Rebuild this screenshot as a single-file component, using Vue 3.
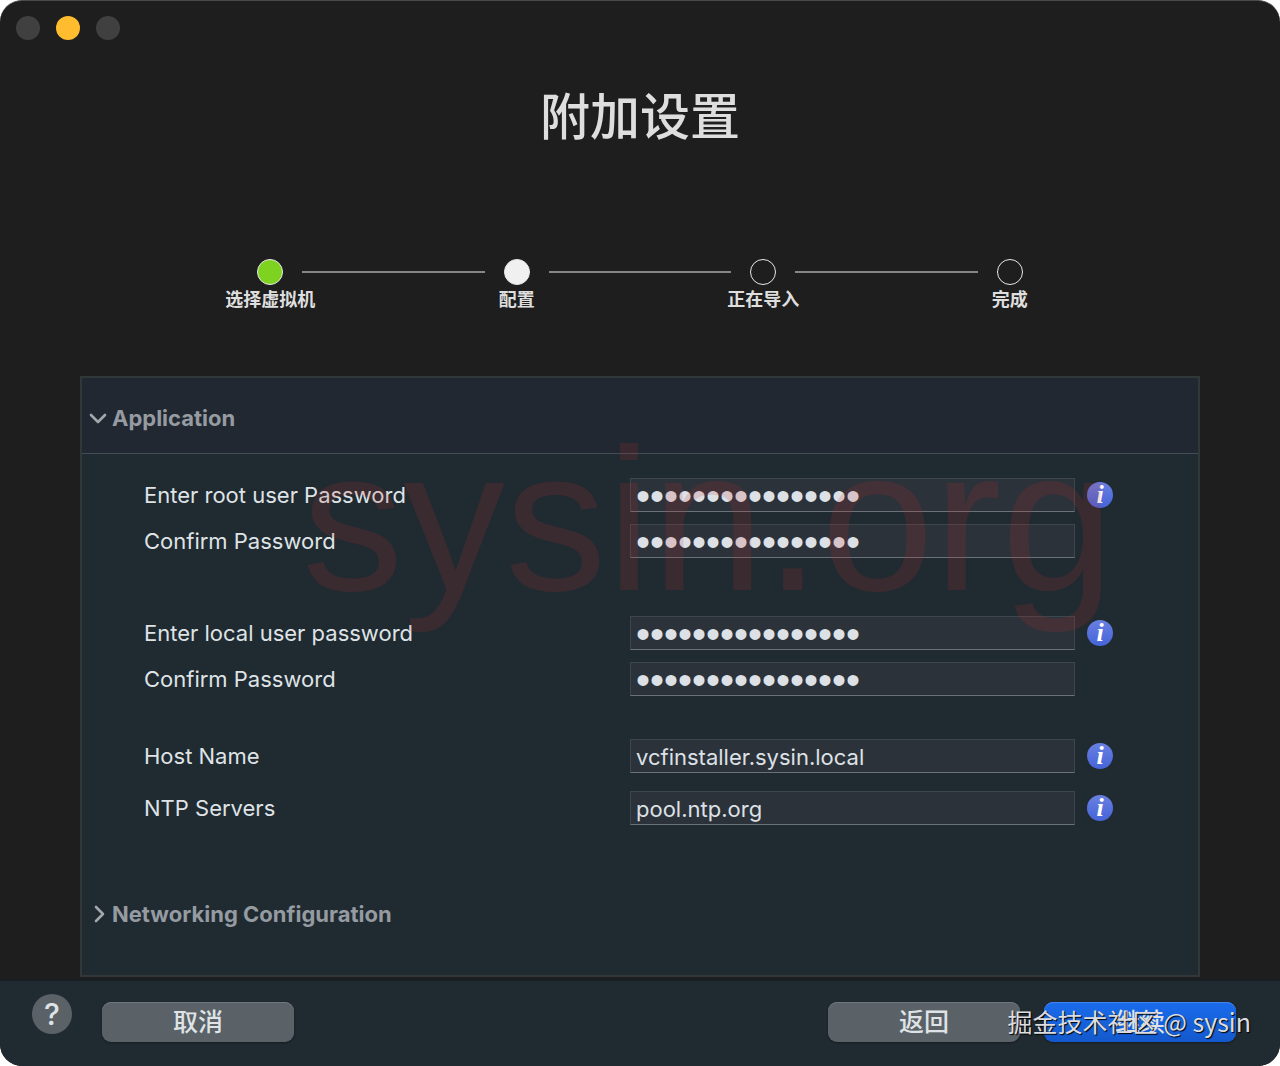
<script setup>
import { ref, reactive } from 'vue'

// --- 步驟 ---
const steps = ref([
  { name: '选择虚拟机', state: 'done' },
  { name: '配置', state: 'active' },
  { name: '正在导入', state: 'todo' },
  { name: '完成', state: 'todo' }
])

// --- 表單欄位 ---
const groups = reactive([
  [
    { id: 'root-pw', label: 'Enter root user Password', type: 'password', value: 'VMware1!VMware1!', info: true },
    { id: 'root-pw2', label: 'Confirm Password', type: 'password', value: 'VMware1!VMware1!', info: false }
  ],
  [
    { id: 'local-pw', label: 'Enter local user password', type: 'password', value: 'VMware1!VMware1!', info: true },
    { id: 'local-pw2', label: 'Confirm Password', type: 'password', value: 'VMware1!VMware1!', info: false }
  ],
  [
    { id: 'host', label: 'Host Name', type: 'text', value: 'vcfinstaller.sysin.local', info: true },
    { id: 'ntp', label: 'NTP Servers', type: 'text', value: 'pool.ntp.org', info: true }
  ]
])

const appOpen = ref(true)
const netOpen = ref(false)
</script>

<template>
  <div class="window">
    <div class="titlebar">
      <button class="light" aria-label="关闭"></button>
      <button class="light minimize" aria-label="最小化"></button>
      <button class="light" aria-label="缩放"></button>
    </div>

    <h1>附加设置</h1>

    <ol class="steps">
      <li v-for="step in steps" :key="step.name" :class="step.state">
        <div class="track"><span class="dot"></span></div>
        <span class="step-name">{{ step.name }}</span>
      </li>
    </ol>

    <main class="panel">
      <button class="section-head" :class="{ open: appOpen }" @click="appOpen = !appOpen">
        <svg class="chevron" :class="{ open: appOpen }" width="20" height="20" viewBox="0 0 20 20">
          <path d="M7 3 L14 10 L7 17" />
        </svg>
        Application
      </button>

      <form v-if="appOpen" class="fields" @submit.prevent>
        <div v-for="(group, gi) in groups" :key="gi" class="group">
          <div v-for="f in group" :key="f.id" class="row">
            <label :for="f.id">{{ f.label }}</label>
            <input :id="f.id" v-model="f.value" :type="f.type" autocomplete="off">
            <button v-if="f.info" type="button" class="info">i</button>
          </div>
        </div>
      </form>

      <button class="section-head" @click="netOpen = !netOpen">
        <svg class="chevron" :class="{ open: netOpen }" width="20" height="20" viewBox="0 0 20 20">
          <path d="M8 3 L15 10 L8 17" />
        </svg>
        Networking Configuration
      </button>
    </main>

    <footer>
      <button class="help">?</button>
      <button class="btn">取消</button>
      <button class="btn back">返回</button>
      <button class="btn primary">继续</button>
    </footer>

    <div class="watermark">sysin.org</div>
    <div class="credit">掘金技术社区 @ sysin</div>
  </div>
</template>

<style>
body {
  background: #fff;
}
</style>

<style scoped>
.window {
  position: relative;
  display: flex;
  flex-direction: column;
  box-sizing: border-box;
  min-height: 100vh;
  overflow: hidden;
  border-top: 1px solid #4a4a4a;
  border-radius: 22px;
  background: #1e1e1e;
  color: #dfe3e6;
  font-family: Inter, "Noto Sans CJK SC", sans-serif;
}

button {
  padding: 0;
  border: none;
  color: inherit;
  font-family: inherit;
}

.titlebar {
  display: flex;
  gap: 16px;
  padding: 15px 16px;
}

.light {
  width: 24px;
  height: 24px;
  border-radius: 50%;
  background: #404040;
}

.light.minimize {
  background: #febc2e;
}

h1 {
  margin: 26px 0 0;
  text-align: center;
  font-size: 50px;
  font-weight: 500;
  line-height: 72px;
  color: #dedede;
}

.steps {
  display: grid;
  grid-template-columns: repeat(4, 1fr);
  margin: 106px 147px 0;
  padding: 0;
  list-style: none;
}

.steps li {
  display: flex;
  flex-direction: column;
  align-items: center;
}

.track {
  display: flex;
  align-items: center;
  align-self: stretch;
}

.track::before,
.track::after {
  content: "";
  flex: 1;
  height: 2px;
  background: #868686;
}

.steps li:first-child .track::before,
.steps li:last-child .track::after {
  visibility: hidden;
}

.dot {
  box-sizing: border-box;
  width: 26px;
  height: 26px;
  margin: 0 19px;
  border: 1px solid #e8e8e8;
  border-radius: 50%;
}

.done .dot {
  background: #7ed321;
}

.active .dot {
  background: #f0f0f0;
}

.step-name {
  font-size: 18px;
  font-weight: 700;
  line-height: 30px;
  color: #dedede;
}

.panel {
  flex: 1;
  margin: 61px 80px 2px;
  border: 2px solid #32373a;
  background: #202a31;
}

.section-head {
  display: flex;
  align-items: center;
  gap: 4px;
  width: 100%;
  height: 76px;
  padding: 0 6px;
  background: transparent;
  color: #959ba1;
  font-size: 22px;
  font-weight: 700;
}

.section-head.open {
  padding-top: 4px;
  border-bottom: 1px solid #454d54;
  background: #212831;
}

.chevron {
  fill: none;
  stroke: #a3a8ad;
  stroke-width: 2.6;
  stroke-linecap: round;
  stroke-linejoin: round;
}

.chevron.open {
  transform: rotate(90deg);
}

.fields {
  padding: 24px 85px 51px 62px;
}

.group {
  display: grid;
  gap: 12px;
  margin-bottom: 58px;
}

.group:nth-child(2) {
  margin-bottom: 43px;
}

.group:last-child {
  gap: 18px;
  margin-bottom: 0;
}

.row {
  display: grid;
  grid-template-columns: 486fr 445fr 38px;
  align-items: center;
}

label {
  font-size: 22px;
  line-height: 34px;
}

input {
  box-sizing: border-box;
  width: 100%;
  height: 34px;
  padding: 2px 5px 0;
  border: 1px solid #3d464d;
  border-bottom-color: #6a7177;
  border-radius: 0;
  outline: none;
  background: #2c323a;
  color: #dde1e6;
  font-family: Inter, "Noto Sans CJK SC", sans-serif;
  font-size: 22px;
}

input[type="password"] {
  font-family: "Liberation Sans", sans-serif;
  font-size: 40px;
}

.info {
  width: 26px;
  height: 26px;
  margin-left: 12px;
  border-radius: 50%;
  background: linear-gradient(#6a80e2, #4564d8);
  color: #fff;
  font-family: "Liberation Serif", serif;
  font-size: 26px;
  font-style: italic;
  font-weight: 700;
  line-height: 26px;
}

footer {
  display: flex;
  align-items: flex-start;
  box-sizing: border-box;
  height: 87px;
  padding: 13px 44px 0 32px;
  border-top: 2px solid #191f23;
  background: #202a31;
}

.help {
  width: 40px;
  height: 40px;
  border-radius: 50%;
  background: #5a6167;
  font-size: 30px;
  font-weight: 500;
  line-height: 40px;
}

.btn {
  width: 192px;
  height: 40px;
  margin: 8px 0 0 30px;
  border-radius: 9px;
  background: #5a6167;
  box-shadow: inset 0 1px #70767b, 0 1px 2px #161d22;
  font-size: 25px;
  font-weight: 500;
  line-height: 38px;
}

.btn.back {
  margin-left: auto;
}

.btn.primary {
  margin-left: 24px;
  background: linear-gradient(#1a6bec, #1359cd);
  box-shadow: inset 0 1px #4385ee, 0 1px 2px #161d22;
}

.watermark {
  position: absolute;
  top: 403px;
  left: 302px;
  color: rgba(190, 50, 45, 0.16);
  font-family: "Liberation Sans", Arial, sans-serif;
  font-size: 203px;
  line-height: 232px;
  pointer-events: none;
}

.credit {
  position: absolute;
  right: 29px;
  bottom: 27px;
  color: #dcdde0;
  font-family: "Noto Sans CJK SC", sans-serif;
  font-size: 25px;
  line-height: 36px;
  text-shadow: 1px 1px 1px #000;
  pointer-events: none;
}
</style>
